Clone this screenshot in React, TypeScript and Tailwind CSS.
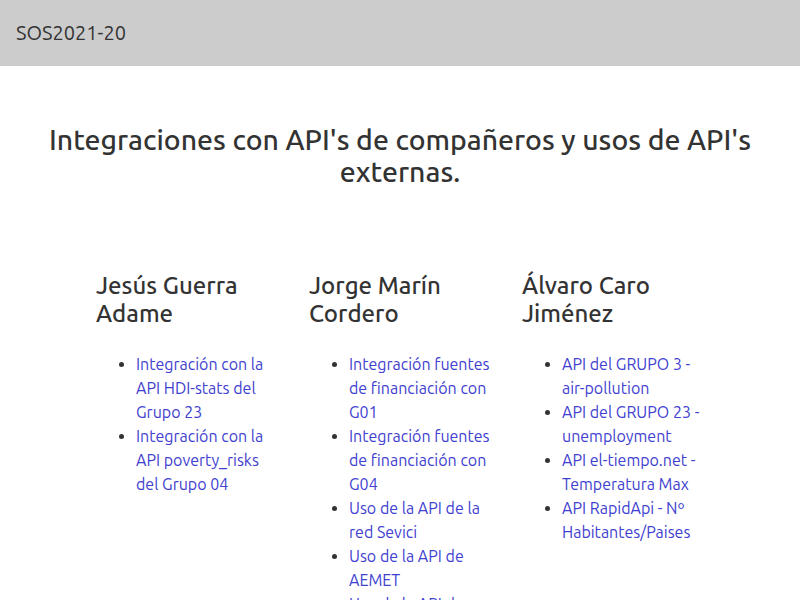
import React from "react";

const cols = [
  {
    name: ["Jesús Guerra", "Adame"],
    items: [
      "Integración con la API HDI-stats del Grupo 23",
      "Integración con la API poverty_risks del Grupo 04",
    ],
  },
  {
    name: ["Jorge Marín", "Cordero"],
    items: [
      "Integración fuentes de financiación con G01",
      "Integración fuentes de financiación con G04",
      "Uso de la API de la red Sevici",
      "Uso de la API de AEMET",
      "Uso de la API de Spotify",
    ],
  },
  {
    name: ["Álvaro Caro", "Jiménez"],
    items: [
      "API del GRUPO 3 - air-pollution",
      "API del GRUPO 23 - unemployment",
      "API el-tiempo.net - Temperatura Max",
      "API RapidApi - Nº Habitantes/Paises",
    ],
  },
];

export default function App() {
  return (
    <div className="w-[800px] h-[600px] overflow-hidden bg-white text-[#333333] font-['Ubuntu','Noto_Sans',sans-serif]">
      <header className="h-[66px] bg-[#cccccc] flex items-center px-4 text-[20px]">
        SOS2021-20
      </header>
      <h1 className="mt-[58px] text-center text-[28.4px] leading-[32px] font-medium px-[40px]">
        Integraciones con API's de compañeros y usos de API's externas.
      </h1>
      <div className="mt-[84px] pl-[96px] grid grid-cols-[184px_184px_184px] gap-x-[29px]">
        {cols.map((c) => (
          <div key={c.name[0]}>
            <h2 className="text-[24px] leading-[28px] font-medium">
              {c.name[0]}
              <br />
              {c.name[1]}
            </h2>
            <ul className="mt-[24px] list-disc pl-[40px] text-[16px] leading-[24px]">
              {c.items.map((it) => (
                <li key={it}>
                  <a href="#" className="text-[#4141cf]">
                    {it}
                  </a>
                </li>
              ))}
            </ul>
          </div>
        ))}
      </div>
    </div>
  );
}
